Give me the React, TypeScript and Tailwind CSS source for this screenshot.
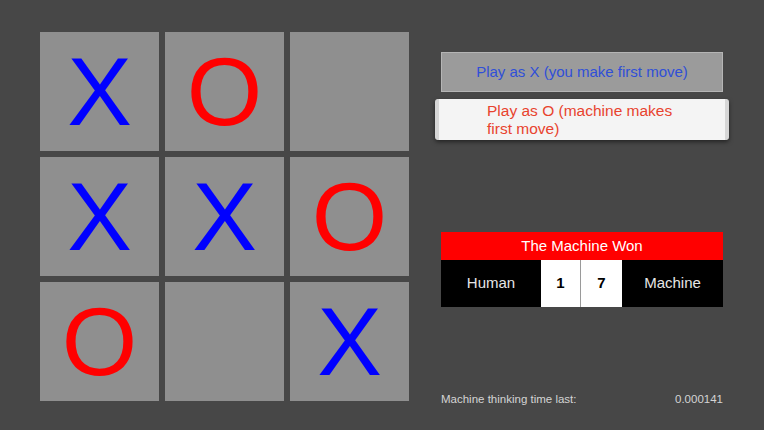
import React from "react";

type Mark = "X" | "O" | "";

const board: Mark[] = ["X", "O", "", "X", "X", "O", "O", "", "X"];

function Cell({ mark }: { mark: Mark }) {
  return (
    <div className="flex h-[119px] w-[119px] items-center justify-center bg-[#8f8f8f]">
      {mark && (
        <span
          className={`text-[97px] leading-none ${
            mark === "X" ? "text-[#0000ff]" : "text-[#ff0000]"
          }`}
        >
          {mark}
        </span>
      )}
    </div>
  );
}

export default function App() {
  return (
    <div className="flex h-[430px] w-[764px] bg-[#474747] pl-[40px] pt-[32px] font-['Liberation_Sans',Arial,sans-serif]">
      <div className="grid h-[369px] grid-cols-[repeat(3,119px)] grid-rows-[repeat(3,119px)] gap-[6px]">
        {board.map((m, i) => (
          <Cell key={i} mark={m} />
        ))}
      </div>

      <div className="ml-[26px] flex w-[294px] flex-col">
        <button className="mx-[6px] mt-[20px] h-[40px] border border-[#b5b5b5] bg-[#9b9b9b] text-[15px] text-[#2f4fd8]">
          Play as X (you make first move)
        </button>

        <button className="mt-[7px] flex h-[41px] items-center justify-center rounded-[3px] border-x-[4px] border-[#d6d6d6] bg-[#f4f4f4] shadow-[0_2px_4px_rgba(0,0,0,0.5)]">
          <span className="w-[190px] text-left text-[15.5px] leading-[18px] text-[#e8432e]">
            Play as O (machine makes first move)
          </span>
        </button>

        <div className="mx-[6px] mt-[92px] flex flex-col">
          <div className="flex h-[28px] items-center justify-center bg-[#ff0000] text-[15px] text-white">
            The Machine Won
          </div>
          <div className="flex h-[47px] bg-black text-[15px]">
            <div className="flex w-[100px] items-center justify-center text-[#e6e6e6]">
              Human
            </div>
            <div className="flex w-[40px] items-center justify-center border-r border-[#9a9a9a] bg-white text-[15px] font-bold text-black">
              1
            </div>
            <div className="flex w-[41px] items-center justify-center bg-white text-[15px] font-bold text-black">
              7
            </div>
            <div className="flex flex-1 items-center justify-center text-[#e6e6e6]">
              Machine
            </div>
          </div>
        </div>

        <div className="mx-[6px] mt-[84px] flex justify-between text-[11.5px] text-[#d4d4d4]">
          <span>Machine thinking time last:</span>
          <span>0.000141</span>
        </div>
      </div>
    </div>
  );
}
